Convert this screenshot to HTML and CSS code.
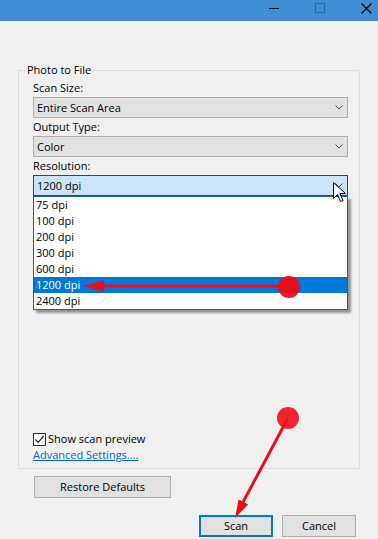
FILE: index.html
```html
<!DOCTYPE html>
<html>
<head>
<meta charset="utf-8">
<link rel="stylesheet" href="styles.css">
</head>
<body>
<div class="window">
  <div class="titlebar">
    <svg class="tb-min" width="11" height="11" viewBox="0 0 11 11"><line x1="0" y1="5.5" x2="10" y2="5.5" stroke="#000" stroke-width="1"/></svg>
    <svg class="tb-max" width="11" height="11" viewBox="0 0 11 11"><rect x="0.5" y="0.5" width="9" height="9" fill="none" stroke="#2c68a6" stroke-width="1"/></svg>
    <svg class="tb-close" width="11" height="11" viewBox="0 0 11 11"><path d="M0.5 0.5 L10.5 10.5 M10.5 0.5 L0.5 10.5" stroke="#000" stroke-width="1.1"/></svg>
  </div>

  <div class="group">
    <div class="legend">Photo to File</div>
    <div class="label">Scan Size:</div>
    <div class="combo">
      <span class="combo-text">Entire Scan Area</span>
      <svg class="chev" width="8" height="5" viewBox="0 0 8 5"><path d="M0.5 0.5 L4 4 L7.5 0.5" fill="none" stroke="#555" stroke-width="1"/></svg>
    </div>
    <div class="label">Output Type:</div>
    <div class="combo">
      <span class="combo-text">Color</span>
      <svg class="chev" width="8" height="5" viewBox="0 0 8 5"><path d="M0.5 0.5 L4 4 L7.5 0.5" fill="none" stroke="#555" stroke-width="1"/></svg>
    </div>
    <div class="label">Resolution:</div>
    <div class="combo-wrap">
      <div class="combo combo-open">
        <span class="combo-text">1200 dpi</span>
        <svg class="chev" width="8" height="5" viewBox="0 0 8 5"><path d="M0.5 0.5 L4 4 L7.5 0.5" fill="none" stroke="#333" stroke-width="1"/></svg>
      </div>
      <ul class="droplist">
        <li>75 dpi</li>
        <li>100 dpi</li>
        <li>200 dpi</li>
        <li>300 dpi</li>
        <li>600 dpi</li>
        <li class="sel">1200 dpi</li>
        <li>2400 dpi</li>
      </ul>
    </div>
    <div class="check-row">
      <span class="checkbox"><svg width="11" height="11" viewBox="0 0 11 11"><path d="M1.5 5.5 L4.2 8.3 L9.6 2" fill="none" stroke="#222" stroke-width="1.2"/></svg></span>
      <span class="check-label">Show scan preview</span>
    </div>
    <div class="link-row"><a class="link" href="#">Advanced Settings....</a></div>
  </div>

  <div class="restore-row">
    <button class="btn btn-restore">Restore Defaults</button>
  </div>
  <div class="action-row">
    <button class="btn btn-default">Scan</button>
    <button class="btn">Cancel</button>
  </div>

  <svg class="annot" width="378" height="539" viewBox="0 0 378 539">
    <line x1="289" y1="286" x2="100" y2="286" stroke="#ee0c16" stroke-width="3"/>
    <polygon points="83,286 104,280.5 104,291.5" fill="#ee0c16"/>
    <circle cx="289" cy="287" r="11" fill="#ee0c16" fill-opacity="0.95"/>
    <line x1="288" y1="418" x2="241" y2="506" stroke="#ee0c16" stroke-width="3"/>
    <polygon points="235,518 238.6,499.6 248.2,504.6" fill="#ee0c16"/>
    <circle cx="288" cy="418" r="11" fill="#f0121c" fill-opacity="0.92"/>
    <path d="M333.5 182.5 L333.5 198.5 L337.5 194.5 L340.5 201.5 L343 200.5 L340 193.5 L345.5 193.5 Z" fill="#fff" stroke="#000" stroke-width="1" stroke-linejoin="miter"/>
  </svg>
</div>
</body>
</html>
```

FILE: styles.css
```css
* { box-sizing: border-box; }
html, body {
  margin: 0;
  padding: 0;
  background: #f0f0f0;
}
body {
  font-family: "Open Sans", "Noto Sans", sans-serif;
  font-size: 11px;
  color: #000;
  width: 378px;
  height: 539px;
  overflow: hidden;
}
.window {
  position: relative;
  width: 378px;
  height: 539px;
}
.titlebar {
  height: 21px;
  background: #408fd5;
  display: flex;
  justify-content: flex-end;
  align-items: flex-start;
  padding: 3px 6px 0 0;
}
.titlebar svg { display: block; }
.tb-min { margin-right: 35px; }
.tb-max { margin-right: 35px; }

.group {
  margin: 49px 0 0 18px;
  width: 342px;
  border: 1px solid #dcdcdc;
  padding: 0 11px 5px 14px;
}
.legend {
  width: fit-content;
  background: #f0f0f0;
  line-height: 16px;
  padding: 0 1px;
  margin: -9px 0 1px -7px;
}
.label {
  line-height: 18px;
  height: 18px;
}
.combo {
  height: 21px;
  background: #e1e1e1;
  border: 1px solid #adadad;
  display: flex;
  align-items: center;
  justify-content: space-between;
  padding: 0 4px 0 3px;
  line-height: 19px;
}
.chev { display: block; }
.combo-wrap { position: relative; }
.combo-open {
  background: #cce4f7;
  border-color: #005499;
}
.droplist {
  position: absolute;
  left: 0;
  top: 21px;
  width: 315px;
  margin: 0;
  padding: 0;
  list-style: none;
  background: #fff;
  border: 1px solid #1f62a8;
  box-shadow: 3px 3px 2px rgba(0, 0, 0, 0.38);
  z-index: 2;
}
.droplist li {
  height: 16px;
  line-height: 16px;
  padding-left: 2px;
}
.droplist li.sel {
  background: #0078d7;
  color: #fff;
}
.check-row {
  margin-top: 235px;
  height: 16px;
  display: flex;
  align-items: center;
}
.checkbox {
  width: 13px;
  height: 13px;
  border: 1px solid #333;
  background: #fff;
  display: flex;
  align-items: center;
  justify-content: center;
}
.checkbox svg { display: block; }
.check-label {
  margin-left: 2px;
  line-height: 16px;
}
.link-row {
  height: 16px;
  line-height: 16px;
}
.link {
  color: #0066cc;
  text-decoration: underline;
}
.restore-row {
  margin-top: 7px;
  padding-left: 34px;
}
.btn {
  font-family: inherit;
  font-size: 11px;
  color: #000;
  background: #e1e1e1;
  border: 1px solid #adadad;
  height: 22px;
  width: 74px;
  padding: 0;
  margin: 0;
  line-height: 20px;
  display: block;
}
.btn-restore { width: 137px; }
.btn-default {
  border: 2px solid #0078d7;
  line-height: 18px;
}
.action-row {
  margin-top: 17px;
  display: flex;
  justify-content: flex-end;
  gap: 9px;
  padding-right: 22px;
}
.annot {
  position: absolute;
  left: 0;
  top: 0;
  pointer-events: none;
  z-index: 5;
}
```
